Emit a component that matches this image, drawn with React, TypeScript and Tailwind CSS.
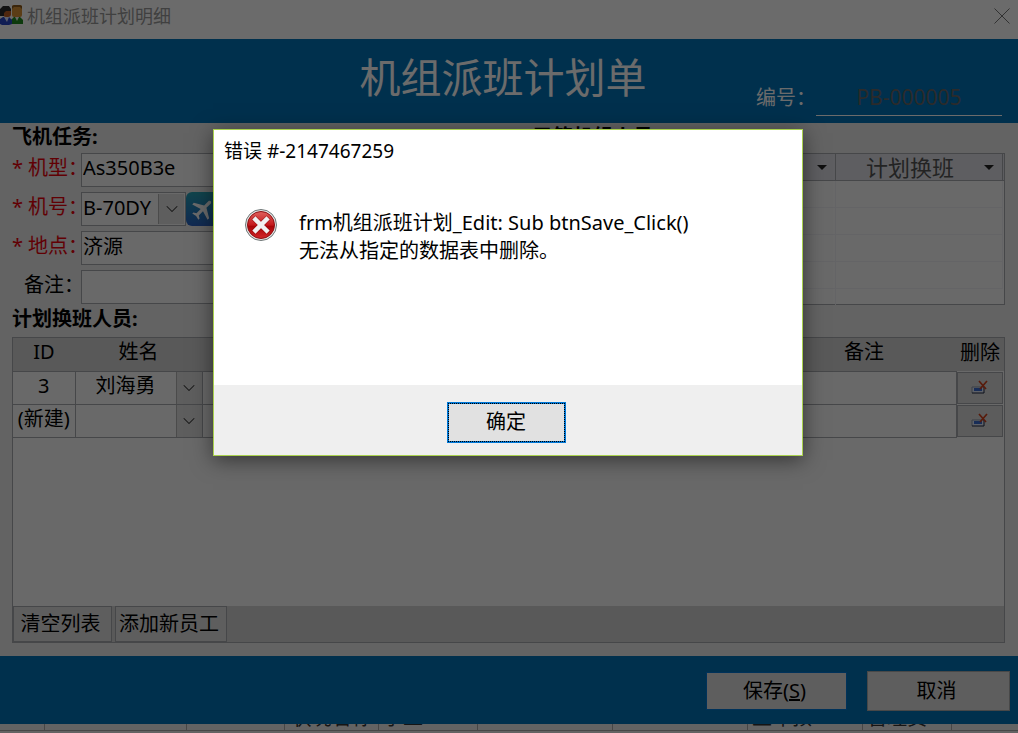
import * as React from 'react';
import { ChevronDown } from 'lucide-react';
import { MdAirplanemodeActive } from 'react-icons/md';
import { clsx } from 'clsx';

type Member = {
  id: string;
  name: string;
};

const members: Member[] = [
  { id: '3', name: '刘海勇' },
  { id: '(新建)', name: '' },
];

const boxClass = 'h-[34px] border border-[#a7a9af] bg-[#fbfbfb]';

const CrewIcon = () => (
  <svg width="23" height="21" viewBox="0 0 23 21" aria-hidden="true">
    <path d="M11 20v-4l3-3h6l3 3v4z" fill="#1f8a1f" />
    <path d="M15 13h4l-2 4z" fill="#f3f3f3" />
    <rect x="12" y="1" width="10" height="12" rx="2" fill="#d89236" />
    <path d="M12 5V2l2-1h6l2 1v3l-2-2h-6z" fill="#8a5a1c" />
    <path d="M0 20v-5l3-2h6l3 3v4l-3 1H2z" fill="#2a48c8" />
    <path d="M4 13h5l-2 5z" fill="#dfe4ff" />
    <rect x="3" y="4" width="8" height="9" rx="3" fill="#bd5e22" />
    <path d="M0 12V5l3-3h6l2 3v2H6L4 9v3z" fill="#2b2b2b" />
  </svg>
);

const ErrorIcon = () => (
  <svg width="32" height="32" viewBox="0 0 32 32" aria-hidden="true">
    <defs>
      <linearGradient id="errorRed" x1="0" y1="0" x2="0" y2="1">
        <stop offset="0" stopColor="#e0605c" />
        <stop offset="0.5" stopColor="#c4191c" />
        <stop offset="0.55" stopColor="#a90508" />
        <stop offset="1" stopColor="#d3272a" />
      </linearGradient>
    </defs>
    <circle cx="16" cy="16" r="15.5" fill="#e4e4e4" stroke="#6f7777" />
    <circle cx="16" cy="16" r="13.5" fill="url(#errorRed)" stroke="#8e1012" />
    <path d="M10.5 10.5l11 11M21.5 10.5l-11 11" stroke="#7d0808" strokeWidth="6" strokeLinecap="square" opacity="0.4" />
    <path d="M10.5 10.5l11 11M21.5 10.5l-11 11" stroke="#f1f1f1" strokeWidth="4.5" strokeLinecap="square" />
  </svg>
);

const DeleteIcon = () => (
  <svg width="17" height="15" viewBox="0 0 17 15" aria-hidden="true">
    <path d="M1 7h12v6H1z" fill="#dfe8f8" />
    <path d="M1 13V7h12" fill="none" stroke="#8a93a8" />
    <path d="M1 13h12V7" fill="none" stroke="#1c2740" />
    <path d="M3 8h8v3H3z" fill="#3b6bd0" />
    <path d="M8 1l7 8M16 1l-7 8" fill="none" stroke="#d2401c" strokeWidth="1.7" />
  </svg>
);

const FieldRow = ({ id, label, required, children }: { id: string; label: string; required?: boolean; children: React.ReactNode }) => (
  <div className="flex">
    <label htmlFor={id} className={clsx('w-[69px] shrink-0 whitespace-nowrap leading-[30px]', required ? 'text-red-600' : 'pl-3')}>
      {required && <span className="inline-block w-4">*</span>}
      {label}
    </label>
    {children}
  </div>
);

const DropArrow = () => (
  <span className="pointer-events-none flex w-[26px] shrink-0 items-center justify-center border-l border-[#b4b4b4] bg-[#e0e0e0] text-[#333]">
    <ChevronDown size={20} strokeWidth={1.25} />
  </span>
);

const FilterArrow = () => (
  <svg width="10" height="5" viewBox="0 0 10 5" aria-hidden="true">
    <path d="M0 0h10L5 5z" fill="#222" />
  </svg>
);

const CrewList = () => (
  <table className="w-full table-fixed border-collapse border border-[#a7a9af] bg-[#fbfbfb]">
    <colgroup>
      <col />
      <col className="w-[167px]" />
      <col className="w-[2px]" />
    </colgroup>
    <thead>
      <tr className="h-[27px] bg-[#dfe1e8] text-[#555]">
        <th className="border border-[#a7a9af] p-0 font-normal">
          <span className="flex justify-end pr-2">
            <FilterArrow />
          </span>
        </th>
        <th className="border border-[#a7a9af] p-0 font-normal">
          <span className="flex items-center pr-2 text-[22px] leading-6">
            <span className="flex-1">计划换班</span>
            <FilterArrow />
          </span>
        </th>
        <th className="border border-[#a7a9af] p-0" />
      </tr>
    </thead>
    <tbody>
      {[1, 2, 3, 4].map((row) => (
        <tr key={row} className="h-[27px]">
          <td className="border border-[#eeeff2] border-l-[#a7a9af] p-0" />
          <td className="border border-[#eeeff2] p-0" />
          <td className="p-0" />
        </tr>
      ))}
      <tr className="h-4">
        <td className="border-r border-[#eeeff2] p-0" />
        <td className="p-0" />
        <td className="p-0" />
      </tr>
    </tbody>
  </table>
);

const MemberTable = () => (
  <div className="flex flex-1 flex-col border border-[#a7a9af] bg-[#fbfbfb]">
    <table className="w-full table-fixed border-collapse">
      <colgroup>
        <col className="w-[62px]" />
        <col className="w-[127px]" />
        <col />
        <col className="w-[184px]" />
        <col className="w-[48px]" />
      </colgroup>
      <thead>
        <tr className="h-[33px] bg-[#d5d5d5]">
          <th className="p-0 pb-1 font-normal">ID</th>
          <th className="p-0 pb-1 font-normal">姓名</th>
          <th className="p-0" />
          <th className="p-0 pb-1 font-normal">备注</th>
          <th className="whitespace-nowrap p-0 pb-1 font-normal">删除</th>
        </tr>
      </thead>
      <tbody>
        {members.map((member) => (
          <tr key={member.id} className="h-[33px]">
            <td className="border border-l-0 border-[#a7a9af] p-0 pb-1 text-center whitespace-nowrap leading-6">{member.id}</td>
            <td className="border border-[#a7a9af] p-0">
              <div className="flex h-8">
                <select aria-label="姓名" defaultValue={member.name} className="min-w-0 flex-1 appearance-none bg-transparent pb-1 text-center">
                  <option>{member.name}</option>
                </select>
                <DropArrow />
              </div>
            </td>
            <td className="border border-r-0 border-[#a7a9af] p-0" />
            <td className="border border-l-0 border-[#a7a9af] p-0" />
            <td className="p-0 pr-px">
              <button aria-label="删除" className="flex h-8 w-full items-center justify-center border border-[#a7a9af] bg-[#dcdcdc]">
                <DeleteIcon />
              </button>
            </td>
          </tr>
        ))}
      </tbody>
    </table>
    <div className="mt-auto flex h-9 gap-[3px] bg-[#d5d5d5]">
      <button className="w-[99px] border border-[#a7a9af] bg-[#e0e0e0] pr-1">清空列表</button>
      <button className="w-28 border border-[#a7a9af] bg-[#e0e0e0] pr-1">添加新员工</button>
    </div>
  </div>
);

// Sliver of the list window that shows under the form
const BackgroundStrip = () => (
  <div className="flex h-[9px] overflow-hidden bg-[#ededed] text-[#333]">
    <span className="h-[7px] w-[45px] border-r border-b border-[#a9a9a9]" />
    <span className="h-[7px] w-[142px] border-r border-b border-[#a9a9a9]" />
    <span className="h-[7px] w-[98px] border-r border-b border-[#a9a9a9]" />
    <span className="flex h-[7px] w-[94px] items-end justify-center overflow-hidden border-r border-b border-[#a9a9a9] leading-6 whitespace-nowrap">状况名称</span>
    <span className="flex h-[7px] w-[99px] items-end overflow-hidden border-r border-b border-[#a9a9a9] pl-1 leading-6 whitespace-nowrap">学工</span>
    <span className="h-[7px] w-[135px] border-r border-b border-[#a9a9a9]" />
    <span className="h-[7px] w-[135px] border-r border-b border-[#a9a9a9]" />
    <span className="flex h-[7px] w-[115px] items-end overflow-hidden border-r border-b border-[#a9a9a9] pl-1 leading-6 whitespace-nowrap">上年预</span>
    <span className="flex h-[7px] w-[89px] items-end overflow-hidden border-r border-b border-[#a9a9a9] pl-1 leading-6 whitespace-nowrap">管理员</span>
    <span className="h-[7px] flex-1 border-b border-[#a9a9a9]" />
  </div>
);

const ErrorDialog = () => (
  <div className="absolute inset-0 flex items-start justify-center bg-black/58 pt-[129px] pr-0.5">
    <div role="alertdialog" aria-labelledby="error-title" className="w-[590px] max-w-full border border-[#a9d14d] bg-white shadow-[0_4px_20px_rgba(0,0,0,0.5)]">
      <h2 id="error-title" className="px-[10px] pt-[7px] text-[19px] leading-7">错误 #-2147467259</h2>
      <div className="flex min-h-[220px] gap-[22px] pt-[44px] pl-[31px]">
        <ErrorIcon />
        <p className="leading-7">
          frm机组派班计划_Edit: Sub btnSave_Click()
          <br />
          无法从指定的数据表中删除。
        </p>
      </div>
      <div className="flex h-[70px] items-center justify-center bg-[#efefef] pt-1 pr-1">
        <button className="h-[41px] w-[119px] border-2 border-[#0078d7] bg-[#e1e1e1] outline-1 -outline-offset-2 outline-dotted outline-black">确定</button>
      </div>
    </div>
  </div>
);

export default function App() {
  return (
    <div className="relative flex min-h-screen flex-col bg-[#ebebeb] font-['Noto_Sans','Noto_Sans_CJK_SC',sans-serif] text-xl text-black">
      <div className="flex h-[39px] items-start bg-white pt-1 text-lg leading-6 text-[#999]">
        <CrewIcon />
        <span className="flex-1 pl-1">机组派班计划明细</span>
        <button aria-label="关闭" className="p-1 pr-2">
          <svg width="16" height="16" viewBox="0 0 16 16" fill="none" stroke="#777">
            <path d="M0.5 0.5l15 15M15.5 0.5l-15 15" />
          </svg>
        </button>
      </div>

      <header className="grid h-[84px] grid-cols-[1fr_auto_1fr] bg-[#0072b8] px-4 text-white">
        <h1 className="col-start-2 pr-3 text-[41px] leading-[76px]">机组派班计划单</h1>
        <div className="flex items-end justify-end pb-[7px]">
          <label htmlFor="number" className="w-[60px] whitespace-nowrap pb-0.5 leading-8">编号：</label>
          <input id="number" defaultValue="PB-000005" className="h-[38px] w-[186px] border-b border-white bg-transparent text-center text-[21px] text-[#666]" />
        </div>
      </header>

      <main className="flex flex-1 flex-col pr-[13px] pb-[13px] pl-3">
        <div className="flex gap-2">
          <section className="w-[513px]">
            <h2 className="h-[30px] font-bold leading-7">飞机任务:</h2>
            <div className="flex flex-col gap-[5px]">
              <FieldRow id="model" label="机型：" required>
                <input id="model" defaultValue="As350B3e" className={clsx(boxClass, 'min-w-0 flex-1 px-px pb-1.5')} />
              </FieldRow>
              <FieldRow id="tail" label="机号：" required>
                <div className={clsx(boxClass, 'flex w-[105px] p-px')}>
                  <select id="tail" defaultValue="B-70DY" className="min-w-0 flex-1 appearance-none bg-transparent pb-1">
                    <option>B-70DY</option>
                  </select>
                  <DropArrow />
                </div>
                <button aria-label="选择飞机" className="flex w-[34px] items-center justify-center rounded-md bg-linear-to-b from-[#28a3b5] to-[#2b62c4] text-white">
                  <MdAirplanemodeActive size={26} className="rotate-45" />
                </button>
              </FieldRow>
              <FieldRow id="place" label="地点：" required>
                <input id="place" defaultValue="济源" className={clsx(boxClass, 'min-w-0 flex-1 px-px pb-1.5')} />
              </FieldRow>
              <FieldRow id="remark" label="备注：">
                <input id="remark" className={clsx(boxClass, 'min-w-0 flex-1 px-px pb-1.5')} />
              </FieldRow>
            </div>
          </section>
          <section className="flex-1">
            <h2 className="h-[30px] font-bold leading-7">已签机组人员:</h2>
            <CrewList />
          </section>
        </div>
        <h2 className="h-8 font-bold leading-7">计划换班人员:</h2>
        <MemberTable />
      </main>

      <footer className="flex h-[68px] items-center justify-end gap-5 bg-[#0072b8] px-2 pt-0.5">
        <button className="h-[38px] w-[141px] border border-[#0078d7] bg-[#e0e0e0] pr-1">
          保存(<u>S</u>)
        </button>
        <button className="h-10 w-[143px] border border-[#adadad] bg-[#e0e0e0] pr-1">取消</button>
      </footer>
      <BackgroundStrip />

      <ErrorDialog />
    </div>
  );
}
